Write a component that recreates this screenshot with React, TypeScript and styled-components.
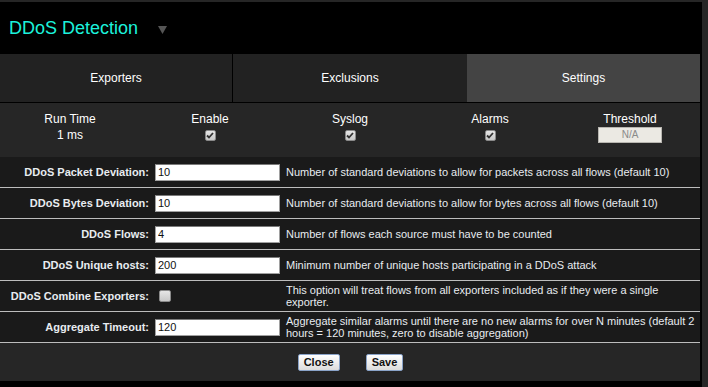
import React from "react";
import styled, { createGlobalStyle } from "styled-components";

const GlobalStyle = createGlobalStyle`
  html, body { margin: 0; padding: 0; background: #262626; }
  body { font-family: "Liberation Sans", Arial, sans-serif; }
  * { box-sizing: border-box; }
`;

const Panel = styled.div`
  margin-top: 2px;
  width: 702px;
  border-right: 2px solid #000;
  border-bottom: 6px solid #000;
  background: #262626;
`;

const Header = styled.div`
  height: 52px;
  background: #000;
  display: flex;
  align-items: center;
  padding-left: 9px;
`;

const Title = styled.h1`
  margin: 0;
  font-size: 18px;
  font-weight: normal;
  color: #1cf2dc;
  line-height: 20px;
`;

const Caret = styled.svg`
  margin-left: 20px;
  margin-top: 3px;
`;

const Tabs = styled.div`
  display: grid;
  grid-template-columns: 232px 235px 233px;
  height: 49px;
  border-bottom: 1px solid #000;
`;

const Tab = styled.div<{ $active?: boolean; $divider?: boolean }>`
  display: flex;
  align-items: center;
  justify-content: center;
  font-size: 12px;
  color: #fff;
  background: ${(p) => (p.$active ? "#444444" : "#222222")};
  border-left: ${(p) => (p.$divider ? "1px solid #000" : "none")};
`;

const Stats = styled.div`
  display: grid;
  grid-template-columns: repeat(5, 140px);
  height: 54px;
  padding-top: 9px;
  background: #262626;
`;

const Stat = styled.div`
  display: flex;
  flex-direction: column;
  align-items: center;
  font-size: 12px;
  color: #fff;
  line-height: 15px;
`;

const StatValue = styled.div`
  height: 16px;
  display: flex;
  align-items: center;
  justify-content: center;
`;

const Box = styled.span<{ $size: number }>`
  display: inline-flex;
  align-items: center;
  justify-content: center;
  width: ${(p) => p.$size}px;
  height: ${(p) => p.$size}px;
  background: linear-gradient(#e6e6e6, #c8c8c8);
  border: 1px solid #8a8a8a;
  border-radius: 2px;
`;

const NaBox = styled.div`
  width: 64px;
  height: 16px;
  background: #ebe9e3;
  border: 1px solid #b8b6b0;
  color: #8a8a8a;
  font-size: 10px;
  line-height: 14px;
  text-align: center;
`;

const Form = styled.div`
  background: #1a1a1a;
`;

const Row = styled.div`
  display: grid;
  grid-template-columns: 150px 136px 409px;
  align-items: center;
  height: 31px;
  border-bottom: 1px solid #bdbdbd;
`;

const Label = styled.div`
  text-align: right;
  padding-right: 1px;
  font-size: 11px;
  font-weight: bold;
  color: #e8ecf0;
`;

const Field = styled.div`
  padding-left: 5px;
  display: flex;
  align-items: center;
`;

const TextInput = styled.input`
  width: 125px;
  height: 17px;
  margin: 0;
  padding: 0 2px;
  border: 1px solid #a0a0a0;
  border-top-color: #7a7a7a;
  background: #fff;
  font-family: "Liberation Sans", Arial, sans-serif;
  font-size: 11px;
  color: #111;
  outline: none;
`;

const Desc = styled.div`
  font-size: 11px;
  line-height: 12px;
  color: #e8ecf0;
`;

const Footer = styled.div`
  height: 38px;
  display: flex;
  align-items: center;
  justify-content: center;
  gap: 26px;
  padding-left: 1px;
`;

const Button = styled.button`
  height: 17px;
  padding: 0 5px;
  font-family: "Liberation Sans", Arial, sans-serif;
  font-size: 11px;
  font-weight: bold;
  color: #111;
  background: linear-gradient(#ffffff, #dcdcdc);
  border: 1px solid #8aa3c8;
  border-radius: 2px;
  line-height: 15px;
`;

const Check = () => (
  <Box $size={11}>
    <svg width="8" height="7" viewBox="0 0 8 7">
      <path d="M1 3.5 L3 5.5 L7 1" fill="none" stroke="#333" strokeWidth="1.8" />
    </svg>
  </Box>
);

const rows: { label: string; value?: string; desc: string; checkbox?: boolean }[] = [
  { label: "DDoS Packet Deviation:", value: "10", desc: "Number of standard deviations to allow for packets across all flows (default 10)" },
  { label: "DDoS Bytes Deviation:", value: "10", desc: "Number of standard deviations to allow for bytes across all flows (default 10)" },
  { label: "DDoS Flows:", value: "4", desc: "Number of flows each source must have to be counted" },
  { label: "DDoS Unique hosts:", value: "200", desc: "Minimum number of unique hosts participating in a DDoS attack" },
  { label: "DDoS Combine Exporters:", checkbox: true, desc: "This option will treat flows from all exporters included as if they were a single exporter." },
  { label: "Aggregate Timeout:", value: "120", desc: "Aggregate similar alarms until there are no new alarms for over N minutes (default 2 hours = 120 minutes, zero to disable aggregation)" },
];

export default function App() {
  return (
    <>
      <GlobalStyle />
      <Panel>
        <Header>
          <Title>DDoS Detection</Title>
          <Caret width="9" height="8" viewBox="0 0 9 8">
            <polygon points="0,0 9,0 4.5,8" fill="#555" />
          </Caret>
        </Header>
        <Tabs>
          <Tab>Exporters</Tab>
          <Tab $divider>Exclusions</Tab>
          <Tab $active>Settings</Tab>
        </Tabs>
        <Stats>
          <Stat>
            <div>Run Time</div>
            <StatValue>1 ms</StatValue>
          </Stat>
          <Stat>
            <div>Enable</div>
            <StatValue><Check /></StatValue>
          </Stat>
          <Stat>
            <div>Syslog</div>
            <StatValue><Check /></StatValue>
          </Stat>
          <Stat>
            <div>Alarms</div>
            <StatValue><Check /></StatValue>
          </Stat>
          <Stat>
            <div>Threshold</div>
            <StatValue><NaBox>N/A</NaBox></StatValue>
          </Stat>
        </Stats>
        <Form>
          {rows.map((r) => (
            <Row key={r.label}>
              <Label>{r.label}</Label>
              <Field>
                {r.checkbox ? (
                  <Box $size={12} style={{ marginLeft: 4 }} />
                ) : (
                  <TextInput defaultValue={r.value} />
                )}
              </Field>
              <Desc>{r.desc}</Desc>
            </Row>
          ))}
        </Form>
        <Footer>
          <Button>Close</Button>
          <Button>Save</Button>
        </Footer>
      </Panel>
    </>
  );
}
